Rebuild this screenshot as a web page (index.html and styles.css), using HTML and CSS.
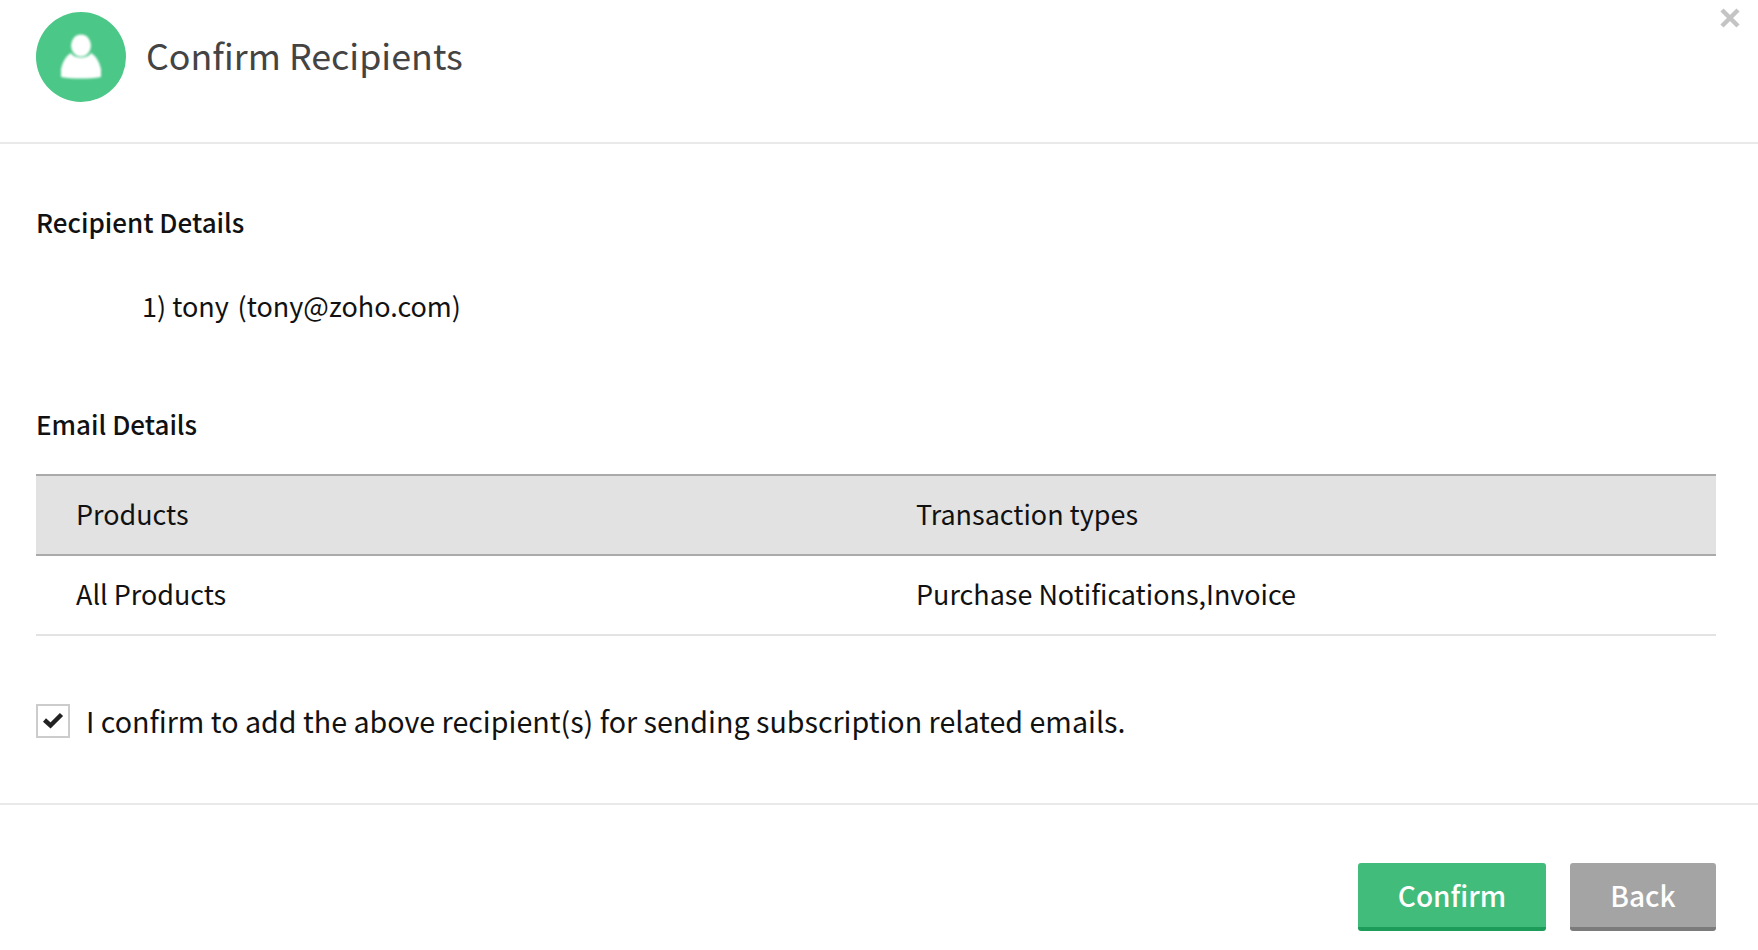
FILE: index.html
```html
<!DOCTYPE html>
<html lang="en">
<head>
  <meta charset="UTF-8">
  <title>Confirm Recipients</title>
  <link rel="stylesheet" href="styles.css">
</head>
<body>
  <div class="dialog">
    <div class="header">
      <div class="avatar">
        <svg class="avatar-icon" width="42" height="46" viewBox="0 0 42 46">
          <ellipse cx="21" cy="11.5" rx="10" ry="11" fill="#fff"/>
          <path d="M11 19 C14 25 28 25 31 19 C36 22 39 27 41 35 L41 43 C30 45 12 45 1 43 L1 35 C3 27 6 22 11 19 Z" fill="#fff"/>
        </svg>
      </div>
      <h1>Confirm Recipients</h1>
      <svg class="close" width="20" height="20" viewBox="0 0 20 20">
        <path d="M2 2 L18 18 M18 2 L2 18" stroke="#c4c4c4" stroke-width="4.5"/>
      </svg>
    </div>

    <div class="content">
      <h2 class="recipient-title">Recipient Details</h2>
      <p class="recipient">1) tony&nbsp; <span class="recipient-mail">(tony@zoho.com)</span></p>

      <h2 class="email-title">Email Details</h2>
      <div class="table">
        <div class="table-row table-head">
          <div class="cell">Products</div>
          <div class="cell">Transaction types</div>
        </div>
        <div class="table-row">
          <div class="cell">All Products</div>
          <div class="cell">Purchase Notifications,Invoice</div>
        </div>
      </div>

      <label class="confirm-line">
        <span class="checkbox">
          <svg width="22" height="18" viewBox="0 0 22 18">
            <path d="M2.5 8 L8.5 13.5 L19.5 2.5" fill="none" stroke="#222" stroke-width="4.5"/>
          </svg>
        </span>
        I confirm to add the above recipient(s) for sending subscription related emails.
      </label>
    </div>

    <div class="footer">
      <button class="btn btn-green">Confirm</button>
      <button class="btn btn-grey">Back</button>
    </div>
  </div>
</body>
</html>
```

FILE: styles.css
```css
html, body {
  margin: 0;
  padding: 0;
  background: #fff;
}
body {
  font-family: "Noto Sans CJK SC", "Noto Sans", sans-serif;
  font-size: 27px;
  color: #111;
}
.dialog {
  width: 1758px;
  height: 950px;
  overflow: hidden;
}
.header {
  position: relative;
  display: flex;
  align-items: flex-start;
  gap: 20px;
  height: 144px;
  padding: 12px 36px 0;
  box-sizing: border-box;
  border-bottom: 2px solid #e9e9e9;
}
.avatar {
  width: 90px;
  height: 90px;
  border-radius: 50%;
  background: #4bc787;
  display: flex;
  align-items: center;
  justify-content: center;
}
.avatar-icon {
  filter: blur(0.8px);
}
h1 {
  margin: 0;
  font-size: 35.8px;
  font-weight: 400;
  line-height: 84px;
  color: #444;
}
.close {
  position: absolute;
  top: 8px;
  right: 18px;
}
.content {
  padding: 0 42px 0 36px;
  height: 661px;
  box-sizing: border-box;
  border-bottom: 2px solid #e9e9e9;
}
h2 {
  margin: 0;
  font-size: 26px;
  font-weight: 500;
  line-height: 40px;
}
.recipient-title {
  padding-top: 58px;
}
.recipient {
  margin: 44px 0 0;
  padding-left: 106px;
  line-height: 40px;
}
.recipient-mail {
  margin-left: -3.4px;
}
.email-title {
  margin-top: 78px;
}
.table {
  margin-top: 30px;
}
.table-row {
  display: flex;
  height: 80px;
  align-items: center;
  box-sizing: border-box;
  border-bottom: 2px solid #e3e3e3;
}
.table-head {
  height: 82px;
  background: #e2e2e2;
  border-top: 2px solid #aaa;
  border-bottom: 2px solid #aaa;
}
.cell {
  width: 50%;
  padding: 0 0 3px 40px;
  box-sizing: border-box;
  font-size: 26.95px;
}
.confirm-line {
  display: flex;
  align-items: center;
  gap: 16px;
  margin-top: 67px;
  font-size: 28.65px;
  line-height: 36px;
}
.checkbox {
  width: 34px;
  height: 34px;
  box-sizing: border-box;
  border: 2px solid #ccc;
  display: flex;
  align-items: center;
  justify-content: center;
}
.footer {
  display: flex;
  justify-content: flex-end;
  gap: 24px;
  padding: 58px 42px 0 0;
}
.btn {
  height: 68px;
  border: 0;
  border-bottom: 4px solid;
  border-radius: 3px;
  color: #fff;
  font-family: inherit;
  font-size: 28px;
  font-weight: 500;
  padding: 0;
}
.btn-green {
  width: 188px;
  background: #41bc7b;
  border-color: #1d9c59;
}
.btn-grey {
  width: 146px;
  background: #a4a4a4;
  border-color: #7b7b7b;
}
```
